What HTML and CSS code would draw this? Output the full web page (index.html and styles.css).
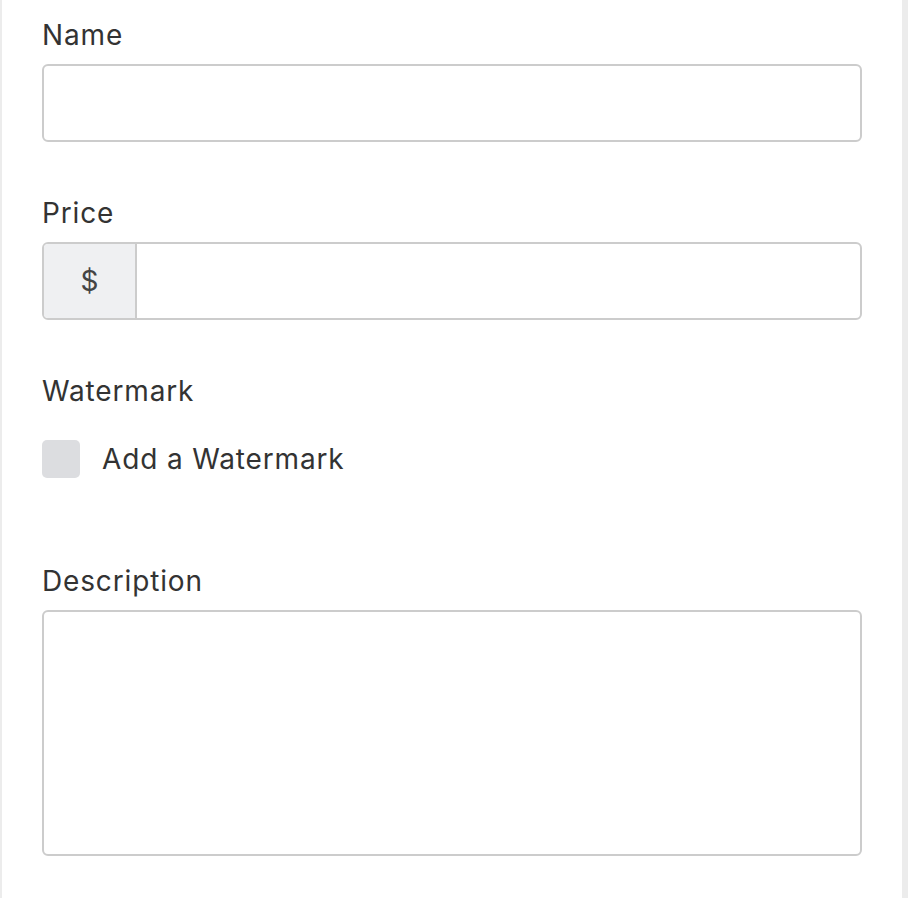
FILE: index.html
```html
<!DOCTYPE html>
<html>
<head>
<meta charset="utf-8">
<link rel="stylesheet" href="styles.css">
</head>
<body>
<div class="page">
  <form class="panel">
    <div class="group">
      <label class="label">Name</label>
      <div class="input"></div>
    </div>
    <div class="group">
      <label class="label">Price</label>
      <div class="input-group">
        <span class="addon">$</span>
        <div class="field"></div>
      </div>
    </div>
    <div class="group group-check">
      <label class="label">Watermark</label>
      <div class="check-row">
        <span class="checkbox"></span>
        <span class="check-text">Add a Watermark</span>
      </div>
    </div>
    <div class="group">
      <label class="label">Description</label>
      <div class="textarea"></div>
    </div>
  </form>
</div>
</body>
</html>
```
FILE: styles.css
```css
html, body {
  margin: 0;
  padding: 0;
  background: #ececec;
}
.page {
  width: 908px;
  height: 898px;
  box-sizing: border-box;
  padding-left: 2px;
  padding-right: 6px;
  background: #ececec;
  overflow: hidden;
}
.panel {
  background: #ffffff;
  height: 100%;
  box-sizing: border-box;
  padding: 14px 40px 0 40px;
  font-family: Inter, "Noto Sans", sans-serif;
  color: #333333;
}
.group {
  display: flex;
  flex-direction: column;
  margin-bottom: 50px;
}
.label {
  display: block;
  font-size: 28px;
  line-height: 42px;
  height: 40px;
  margin-bottom: 10px;
  letter-spacing: 0.85px;
}
.input, .input-group, .textarea {
  box-sizing: border-box;
  width: 820px;
  height: 78px;
  border: 2px solid #cccccc;
  border-radius: 6px;
  background: #ffffff;
}
.input-group {
  display: flex;
  overflow: hidden;
}
.addon {
  width: 91px;
  background: #eff0f2;
  border-right: 2px solid #cccccc;
  display: flex;
  align-items: center;
  justify-content: center;
  font-size: 28px;
  color: #444444;
}
.field {
  flex: 1;
}
.group-check {
  margin-bottom: 82px;
}
.group-check .label {
  margin-bottom: 30px;
}
.check-row {
  display: flex;
  align-items: center;
  gap: 22px;
  height: 38px;
}
.checkbox {
  width: 38px;
  height: 38px;
  border-radius: 5px;
  background: #dcdde0;
  flex: none;
}
.check-text {
  font-size: 28px;
  letter-spacing: 0.85px;
  color: #333333;
}
.textarea {
  height: 246px;
}
```
